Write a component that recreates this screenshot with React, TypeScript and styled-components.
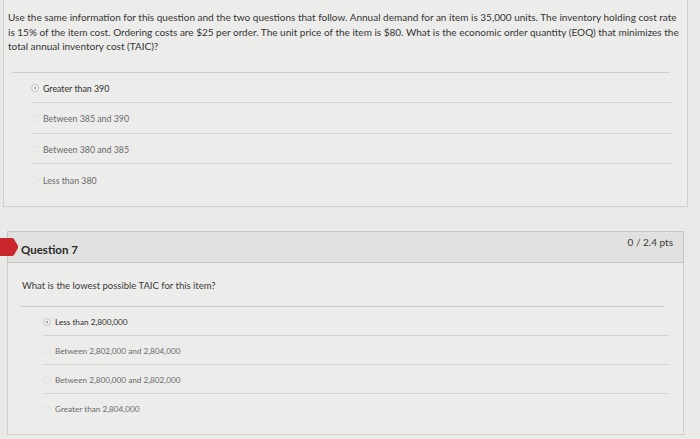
import styled, { createGlobalStyle } from 'styled-components'

const GlobalStyle = createGlobalStyle`
  body {
    margin: 0;
    background: #e9e9e7;
    font-family: Lato, "Open Sans", sans-serif;
  }
`

const Page = styled.div`
  width: 700px;
  height: 439px;
  overflow: hidden;
  background: #e9e9e7;
`

const PrevPanel = styled.div`
  margin: 0 12px 0 3px;
  border: 1px solid #cfcfcd;
  border-top: none;
  background: #ececea;
  padding: 10px 0 11px;
`

const Prompt = styled.p`
  margin: 0 0 18px 4px;
  font-size: 10px;
  line-height: 14.5px;
  color: #353535;
`

const PromptLine = styled.span`
  display: block;
  white-space: nowrap;
`

const Divider = styled.div<{ $inset: number }>`
  height: 1px;
  background: #cdcdcb;
  margin: 0 18px 0 ${({ $inset }) => $inset}px;
`

const OptionList = styled.div<{ $inset: number }>`
  display: flex;
  flex-direction: column;
  margin-left: ${({ $inset }) => $inset}px;
  margin-right: 14px;
`

const OptionRow = styled.div<{ $height: number; $last?: boolean }>`
  height: ${({ $height }) => $height}px;
  display: flex;
  align-items: center;
  gap: 4px;
  padding-top: 2px;
  box-sizing: border-box;
  border-bottom: ${({ $last }) => ($last ? 'none' : '1px solid #d3d3d1')};
`

const Radio = styled.span<{ $on?: boolean }>`
  width: 6px;
  height: 6px;
  border-radius: 50%;
  border: 1px solid ${({ $on }) => ($on ? '#c4c4c2' : '#e3e3e1')};
  background: ${({ $on }) => ($on ? '#f2f2f0' : 'transparent')};
  position: relative;
  &::after {
    content: '';
    display: ${({ $on }) => ($on ? 'block' : 'none')};
    position: absolute;
    left: 2px;
    top: 2px;
    width: 2px;
    height: 2px;
    border-radius: 50%;
    background: #8a8a8a;
  }
`

const OptionText = styled.span<{ $size: number; $on?: boolean }>`
  font-size: ${({ $size }) => $size}px;
  color: ${({ $on }) => ($on ? '#2f2f2f' : '#6a6a6a')};
`

const QuestionBlock = styled.div`
  margin: 24px 16px 0 7px;
  position: relative;
`

const Header = styled.div`
  height: 30px;
  background: #e1e1df;
  border: 1px solid #c6c6c4;
  display: flex;
  justify-content: space-between;
  padding: 0 10px 0 13px;
`

const Title = styled.h3`
  margin: 0;
  align-self: center;
  padding-top: 5px;
  font-size: 11.5px;
  font-weight: 700;
  color: #2a2a2a;
`

const Points = styled.span`
  padding-top: 4px;
  font-size: 10px;
  color: #3a3a3a;
`

const Marker = styled.svg`
  position: absolute;
  left: -7px;
  top: 7px;
`

const Body = styled.div`
  border: 1px solid #cfcfcd;
  border-top: none;
  background: #ececea;
  padding: 17px 0 11px;
`

const Ask = styled.p`
  margin: 0 0 15px 14px;
  font-size: 9.5px;
  color: #3a3a3a;
`

const first = ['Greater than 390', 'Between 385 and 390', 'Between 380 and 385', 'Less than 380']
const second = [
  'Less than 2,800,000',
  'Between 2,802,000 and 2,804,000',
  'Between 2,800,000 and 2,802,000',
  'Greater than 2,804,000',
]

const App = () => {
  return (
    <Page>
      <GlobalStyle />
      <PrevPanel>
        <Prompt>
          <PromptLine>
            Use the same information for this question and the two questions that follow. Annual demand for an item is
            35,000 units. The inventory holding cost rate
          </PromptLine>
          <PromptLine>
            is 15% of the item cost. Ordering costs are $25 per order. The unit price of the item is $80. What is the
            economic order quantity (EOQ) that minimizes the
          </PromptLine>
          <PromptLine>total annual inventory cost (TAIC)?</PromptLine>
        </Prompt>
        <Divider $inset={8} />
        <OptionList $inset={27}>
          {first.map((o, i) => (
            <OptionRow key={o} $height={30.5} $last={i === first.length - 1}>
              <Radio $on={i === 0} />
              <OptionText $size={8.8} $on={i === 0}>
                {o}
              </OptionText>
            </OptionRow>
          ))}
        </OptionList>
      </PrevPanel>
      <QuestionBlock>
        <Marker width="18" height="18" viewBox="0 0 18 18">
          <path d="M0 0 H12 Q13 0 14 1 L18 8 Q18.5 9 18 10 L14 17 Q13 18 12 18 H0 Z" fill="#c9252c" />
        </Marker>
        <Header>
          <Title>Question 7</Title>
          <Points>0 / 2.4 pts</Points>
        </Header>
        <Body>
          <Ask>What is the lowest possible TAIC for this item?</Ask>
          <Divider $inset={12} />
          <OptionList $inset={35}>
            {second.map((o, i) => (
              <OptionRow key={o} $height={29} $last={i === second.length - 1}>
                <Radio $on={i === 0} />
                <OptionText $size={8.2} $on={i === 0}>
                  {o}
                </OptionText>
              </OptionRow>
            ))}
          </OptionList>
        </Body>
      </QuestionBlock>
    </Page>
  )
}

export default App
